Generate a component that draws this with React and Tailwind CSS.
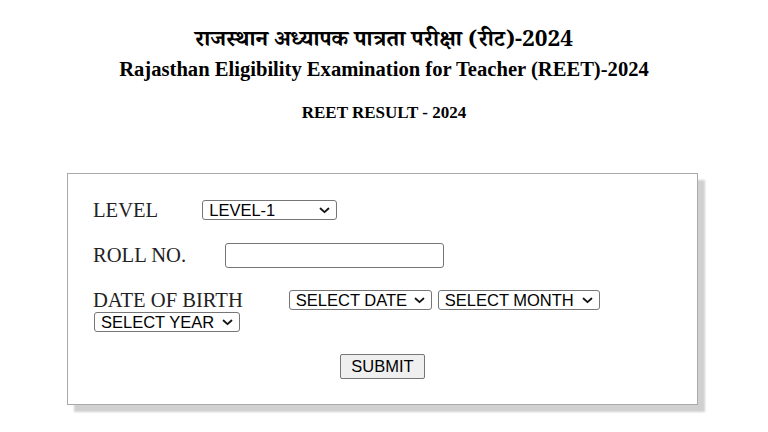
import React from "react";

function Chevron() {
  return (
    <svg width="11" height="7" viewBox="0 0 11 7" className="shrink-0">
      <path d="M1.5 1.5 L5.5 5.2 L9.5 1.5" fill="none" stroke="#111" strokeWidth="1.8" strokeLinecap="round" strokeLinejoin="round" />
    </svg>
  );
}

function FakeSelect({ label, w, className = "" }) {
  return (
    <div
      className={`inline-flex items-center justify-between h-[20px] border border-[#767676] rounded-[3px] bg-white pl-[6px] pr-[6px] text-[16.5px] leading-none text-black font-['Liberation_Sans',Arial,sans-serif] ${className}`}
      style={{ width: w }}
    >
      <span>{label}</span>
      <Chevron />
    </div>
  );
}

export default function App() {
  return (
    <div className="w-[768px] h-[432px] bg-white overflow-hidden font-['Liberation_Serif','Times_New_Roman',serif] text-black">
      <div className="pt-[28px] flex flex-col items-center">
        <div className="text-[22.5px] font-bold leading-[30px] font-['Noto_Serif_Devanagari','Noto_Sans_Devanagari','Lohit_Devanagari','FreeSerif','Liberation_Serif',serif]">
          राजस्थान अध्यापक पात्रता परीक्षा (रीट)-2024
        </div>
        <div className="text-[20.6px] font-bold leading-[22px]">
          Rajasthan Eligibility Examination for Teacher (REET)-2024
        </div>
        <div className="mt-[23px] text-[17px] font-bold leading-[20px]">REET RESULT - 2024</div>
      </div>

      <div className="mt-[50px] ml-[67px] w-[631px] h-[232px] border border-[#a9a9a9] bg-white shadow-[7px_7px_2px_#d0d0d0] pl-[25px] pt-[25px]">
        <div className="flex items-center h-[22px]">
          <span className="text-[20.6px] leading-none text-[#222]">LEVEL</span>
          <FakeSelect label="LEVEL-1" w={135} className="ml-[44px]" />
        </div>
        <div className="flex items-center h-[26px] mt-[21px]">
          <span className="text-[20.6px] leading-none text-[#222]">ROLL NO.</span>
          <div className="ml-[39px] w-[219px] h-[25px] border border-[#767676] rounded-[3px] bg-white" />
        </div>
        <div className="flex items-center h-[22px] mt-[21px]">
          <span className="text-[20.6px] leading-none text-[#222]">DATE OF BIRTH</span>
          <FakeSelect label="SELECT DATE" w={143} className="ml-[46px]" />
          <FakeSelect label="SELECT MONTH" w={162} className="ml-[6px]" />
        </div>
        <div className="flex items-center h-[20px] mt-[1px]">
          <FakeSelect label="SELECT YEAR" w={146} className="ml-[1px]" />
        </div>
        <div className="flex justify-center mt-[22px] -ml-[25px]">
          <div className="w-[85px] h-[25px] border border-[#767676] rounded-[2px] bg-[#efefef] flex items-center justify-center text-[16.5px] text-black font-['Liberation_Sans',Arial,sans-serif]">
            SUBMIT
          </div>
        </div>
      </div>
    </div>
  );
}
